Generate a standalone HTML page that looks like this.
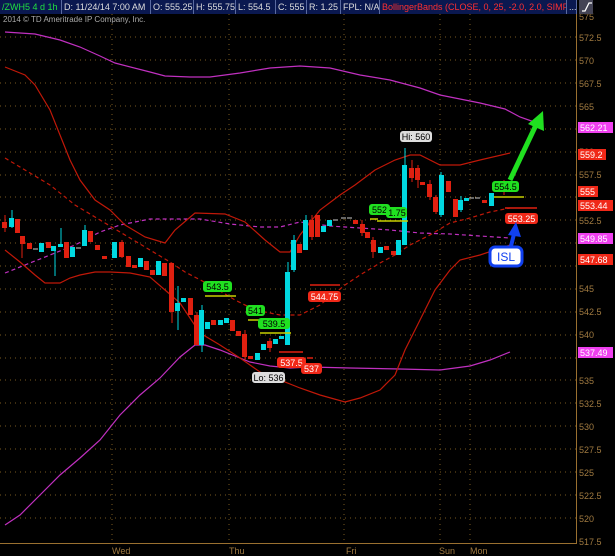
<!DOCTYPE html>
<html><head><meta charset="utf-8"><style>
body{margin:0;background:#000;width:615px;height:556px;overflow:hidden;font-family:"Liberation Sans",sans-serif}
svg{position:absolute;left:0;top:0}
.top{position:absolute;left:0;top:0;height:14px;width:577px;background:#0a1850;font-size:9px;color:#ddd;line-height:14px;overflow:hidden;white-space:nowrap}
.top span{position:absolute;top:0;height:14px;padding-left:2px;border-right:1px solid #5a6aa0;box-sizing:border-box;overflow:hidden}
</style></head><body>
<svg width="615" height="556" font-family="Liberation Sans, sans-serif">
<g stroke="#7a5a20" stroke-dasharray="1,4" stroke-width="1">
<line x1="0" x2="576" y1="37" y2="37"/><line x1="0" x2="576" y1="60" y2="60"/><line x1="0" x2="576" y1="83" y2="83"/><line x1="0" x2="576" y1="106" y2="106"/><line x1="0" x2="576" y1="129" y2="129"/><line x1="0" x2="576" y1="152" y2="152"/><line x1="0" x2="576" y1="175" y2="175"/><line x1="0" x2="576" y1="197" y2="197"/><line x1="0" x2="576" y1="220" y2="220"/><line x1="0" x2="576" y1="243" y2="243"/><line x1="0" x2="576" y1="266" y2="266"/><line x1="0" x2="576" y1="289" y2="289"/><line x1="0" x2="576" y1="312" y2="312"/><line x1="0" x2="576" y1="335" y2="335"/><line x1="0" x2="576" y1="358" y2="358"/><line x1="0" x2="576" y1="380" y2="380"/><line x1="0" x2="576" y1="403" y2="403"/><line x1="0" x2="576" y1="426" y2="426"/><line x1="0" x2="576" y1="449" y2="449"/><line x1="0" x2="576" y1="472" y2="472"/><line x1="0" x2="576" y1="495" y2="495"/><line x1="0" x2="576" y1="518" y2="518"/>
<line x1="112" x2="112" y1="14" y2="544"/><line x1="229" x2="229" y1="14" y2="544"/><line x1="344" x2="344" y1="14" y2="544"/><line x1="440" x2="440" y1="14" y2="544"/><line x1="470" x2="470" y1="14" y2="544"/>
</g>
<line x1="576.5" x2="576.5" y1="14" y2="544" stroke="#9a7030"/>
<line x1="0" x2="577" y1="543.5" y2="543.5" stroke="#9a7030"/>
<g fill="#a07a40" font-size="9">
<text x="579" y="20">575</text><text x="579" y="41">572.5</text><text x="579" y="64">570</text><text x="579" y="87">567.5</text><text x="579" y="110">565</text><text x="579" y="155">560</text><text x="579" y="178">557.5</text><text x="579" y="224">552.5</text><text x="579" y="292">545</text><text x="579" y="315">542.5</text><text x="579" y="338">540</text><text x="579" y="384">535</text><text x="579" y="407">532.5</text><text x="579" y="430">530</text><text x="579" y="453">527.5</text><text x="579" y="476">525</text><text x="579" y="499">522.5</text><text x="579" y="522">520</text><text x="579" y="545">517.5</text>
<text x="112" y="554">Wed</text><text x="229" y="554">Thu</text><text x="346" y="554">Fri</text><text x="439" y="554">Sun</text><text x="470" y="554">Mon</text>
</g>
<text x="3" y="22" fill="#aaa" font-size="8">2014 © TD Ameritrade IP Company, Inc.</text>
<g fill="none" stroke-width="1.2">
<polyline stroke="#c030c0" points="5,32 35,34 60,40 80,47 100,56 115,63 150,72 165,76 190,77 210,77 240,73 270,68 300,66 330,68 360,75 390,80 420,88 440,95 460,99 480,103 505,109 520,117 540,124"/>
<polyline stroke="#c030c0" points="5,525 20,515 40,495 60,475 80,458 100,440 120,415 140,395 160,378 180,357 195,345 205,345 220,350 235,356 250,362 270,366 290,368 310,367 350,368 400,369 440,370 470,366 490,360 510,352"/>
<polyline stroke="#c030c0" stroke-dasharray="4,3" points="5,273 25,265 50,255 75,245 100,232 120,225 150,219 180,219 200,219 230,224 260,227 280,227 300,222 330,226 360,228 390,230 420,233 450,234 480,236 510,238"/>
<polyline stroke="#c01808" points="5,67 25,75 35,85 50,110 60,135 70,160 80,180 95,200 110,210 125,225 145,237 165,243 175,230 195,213 225,214 245,222 265,240 280,252 290,252 300,235 320,210 340,195 355,185 375,170 395,160 410,155 420,155 440,165 460,165 480,160 510,153"/>
<polyline stroke="#c01808" points="5,250 20,262 35,275 45,283 60,283 70,278 80,275 95,272 110,272 130,273 140,275 150,277 165,290 180,303 200,333 220,345 240,358 260,372 280,380 300,388 320,395 345,402 360,398 380,390 395,375 405,350 420,320 435,290 450,270 460,260 480,255 510,245"/>
<polyline stroke="#c01808" stroke-dasharray="4,3" points="5,158 25,170 50,185 75,205 100,220 125,235 150,250 170,262 185,272 210,285 235,300 255,310 280,315 300,315 320,305 345,285 360,275 380,263 395,255 410,245 430,235 450,223 470,218 490,212 510,208"/>
</g>
<path stroke="#00d8e0" fill="none" d="M12,210V228M55,246V276M61,228V247M85,225V246M178,286V330M202,305V352M288,262V345M294,235V272M306,215V250M405,148V245M441,172V217M461,196V212"/>
<path stroke="#e02010" fill="none" d="M5,215V232M22,236V258M122,240V258M172,263V323M197,312V345M245,330V360M270,338V352M312,215V240M362,220V236M373,237V258M412,160V182M418,165V188M430,180V200M436,195V214M504,180V195"/>
<g fill="#00d8e0">
<rect x="9" y="218" width="5" height="9"/><rect x="39" y="243" width="5" height="9"/><rect x="51" y="246" width="5" height="5"/><rect x="58" y="244" width="5" height="3"/><rect x="70" y="247" width="5" height="10"/><rect x="82" y="230" width="5" height="16"/><rect x="112" y="242" width="5" height="16"/><rect x="138" y="258" width="5" height="9"/><rect x="156" y="261" width="5" height="14"/><rect x="175" y="303" width="5" height="8"/><rect x="181" y="298" width="5" height="4"/><rect x="199" y="310" width="5" height="35"/><rect x="205" y="322" width="5" height="7"/><rect x="218" y="320" width="5" height="5"/><rect x="224" y="318" width="5" height="5"/><rect x="255" y="353" width="5" height="7"/><rect x="261" y="344" width="5" height="6"/><rect x="273" y="339" width="5" height="5"/><rect x="279" y="336" width="5" height="3"/><rect x="285" y="272" width="5" height="73"/><rect x="291" y="240" width="5" height="30"/><rect x="303" y="220" width="5" height="30"/><rect x="321" y="226" width="5" height="6"/><rect x="327" y="220" width="5" height="6"/><rect x="378" y="247" width="5" height="6"/><rect x="396" y="240" width="5" height="15"/><rect x="402" y="165" width="5" height="80"/><rect x="439" y="175" width="5" height="40"/><rect x="458" y="200" width="5" height="10"/><rect x="464" y="198" width="5" height="3"/><rect x="489" y="193" width="5" height="13"/><rect x="495" y="185" width="5" height="5"/>
</g>
<g fill="#e02010">
<rect x="2" y="222" width="5" height="6"/><rect x="15" y="219" width="5" height="14"/><rect x="20" y="236" width="5" height="8"/><rect x="27" y="243" width="5" height="6"/><rect x="46" y="242" width="5" height="6"/><rect x="64" y="242" width="5" height="16"/><rect x="88" y="231" width="5" height="11"/><rect x="95" y="245" width="5" height="5"/><rect x="102" y="256" width="5" height="3"/><rect x="119" y="242" width="5" height="15"/><rect x="126" y="256" width="5" height="11"/><rect x="132" y="265" width="5" height="3"/><rect x="144" y="261" width="5" height="9"/><rect x="150" y="270" width="5" height="5"/><rect x="162" y="263" width="5" height="13"/><rect x="169" y="263" width="5" height="49"/><rect x="188" y="298" width="5" height="17"/><rect x="194" y="315" width="5" height="30"/><rect x="211" y="320" width="5" height="5"/><rect x="230" y="320" width="5" height="11"/><rect x="236" y="331" width="5" height="5"/><rect x="242" y="334" width="5" height="23"/><rect x="248" y="356" width="5" height="3"/><rect x="267" y="341" width="5" height="7"/><rect x="297" y="244" width="5" height="9"/><rect x="309" y="220" width="5" height="17"/><rect x="315" y="215" width="5" height="22"/><rect x="353" y="220" width="5" height="4"/><rect x="360" y="224" width="5" height="9"/><rect x="365" y="232" width="5" height="6"/><rect x="371" y="240" width="5" height="12"/><rect x="384" y="246" width="5" height="4"/><rect x="391" y="251" width="5" height="4"/><rect x="409" y="168" width="5" height="10"/><rect x="415" y="168" width="5" height="12"/><rect x="420" y="182" width="5" height="3"/><rect x="427" y="184" width="5" height="13"/><rect x="433" y="197" width="5" height="15"/><rect x="446" y="181" width="5" height="11"/><rect x="453" y="199" width="5" height="18"/><rect x="482" y="200" width="5" height="3"/><rect x="501" y="185" width="5" height="5"/>
</g>
<path stroke="#ccc" d="M33,249h5M76,248h5M333,220h5M341,218h5M347,218h5M469,198h5M475,198h5"/>
<g stroke="#c8d000" stroke-width="1.5">
<line x1="205" x2="236" y1="296" y2="296"/><line x1="248" x2="264" y1="320" y2="320"/><line x1="260" x2="291" y1="333" y2="333"/><line x1="370" x2="378" y1="219" y2="219"/><line x1="377" x2="408" y1="221" y2="221"/><line x1="494" x2="524" y1="197" y2="197"/>
</g>
<g stroke="#e02010" stroke-width="1.5">
<line x1="279" x2="303" y1="352" y2="352"/><line x1="307" x2="313" y1="358" y2="358"/><line x1="310" x2="340" y1="285" y2="285"/><line x1="505" x2="537" y1="208" y2="208"/>
</g>
<g font-size="9" text-anchor="middle">
<rect x="203" y="281" width="29" height="11" rx="3" fill="#20e020"/><text x="217.5" y="290" fill="#000">543.5</text>
<rect x="246" y="305" width="19" height="11" rx="3" fill="#20e020"/><text x="255.5" y="314" fill="#000">541</text>
<rect x="258" y="318" width="32" height="11" rx="3" fill="#20e020"/><text x="274" y="327" fill="#000">539.5</text>
<rect x="369" y="204" width="21" height="11" rx="3" fill="#20e020"/><text x="379.5" y="213" fill="#000">552</text>
<rect x="386" y="207" width="21" height="11" rx="3" fill="#20e020"/><text x="397" y="216" fill="#000">1.75</text>
<rect x="492" y="181" width="27" height="11" rx="3" fill="#20e020"/><text x="505.5" y="190" fill="#000">554.5</text>
<rect x="277" y="357" width="29" height="11" rx="3" fill="#f02818"/><text x="291.5" y="366" fill="#fff">537.5</text>
<rect x="301" y="363" width="21" height="11" rx="3" fill="#f02818"/><text x="311.5" y="372" fill="#fff">537</text>
<rect x="308" y="291" width="33" height="11" rx="3" fill="#f02818"/><text x="324.5" y="300" fill="#fff">544.75</text>
<rect x="505" y="213" width="33" height="11" rx="3" fill="#f02818"/><text x="521.5" y="222" fill="#fff">553.25</text>
<rect x="400" y="131" width="32" height="11" rx="3" fill="#ddd"/><text x="416" y="140" fill="#000">Hi: 560</text>
<rect x="252" y="372" width="33" height="11" rx="3" fill="#ddd"/><text x="268.5" y="381" fill="#000">Lo: 536</text>
</g>
<g font-size="9">
<rect x="578" y="122" width="35" height="11" fill="#f040f0"/><text x="580" y="131" fill="#fff">562.21</text>
<rect x="578" y="149" width="28" height="11" fill="#f02818"/><text x="580" y="158" fill="#fff">559.2</text>
<rect x="578" y="186" width="20" height="11" fill="#f02818"/><text x="580" y="195" fill="#fff">555</text>
<rect x="578" y="200" width="35" height="11" fill="#f02818"/><text x="580" y="209" fill="#fff">553.44</text>
<rect x="578" y="233" width="35" height="11" fill="#f040f0"/><text x="580" y="242" fill="#fff">549.85</text>
<rect x="578" y="254" width="35" height="11" fill="#f02818"/><text x="580" y="263" fill="#fff">547.68</text>
<rect x="578" y="347" width="35" height="11" fill="#f040f0"/><text x="580" y="356" fill="#fff">537.49</text>
</g>
<line x1="510" y1="180" x2="536" y2="125" stroke="#20e020" stroke-width="5"/>
<polygon points="543,111 544,131 528,124" fill="#20e020"/>
<line x1="511" y1="246" x2="514" y2="234" stroke="#1040f0" stroke-width="4"/>
<polygon points="516,222 521,237 508,235" fill="#1040f0"/>
<rect x="490" y="247" width="32" height="19" rx="5" fill="#fff" stroke="#1040f0" stroke-width="3"/>
<text x="506" y="261" font-size="12" fill="#1040f0" text-anchor="middle">ISL</text>
<rect x="579" y="0" width="14" height="14" fill="#445"/><path d="M582,11h3l4,-8h3" stroke="#fff" fill="none" stroke-width="1.3"/>
</svg>
<div class="top">
<span style="left:0;width:62px;color:#20e040">/ZWH5 4 d 1h</span>
<span style="left:62px;width:89px">D: 11/24/14 7:00 AM</span>
<span style="left:151px;width:43px">O: 555.25</span>
<span style="left:194px;width:42px">H: 555.75</span>
<span style="left:236px;width:40px">L: 554.5</span>
<span style="left:276px;width:31px">C: 555</span>
<span style="left:307px;width:34px">R: 1.25</span>
<span style="left:341px;width:39px">FPL: N/A</span>
<span style="left:380px;width:187px;color:#ff3030">BollingerBands (CLOSE, 0, 25, -2.0, 2.0, SIMPLE)</span>
<span style="left:567px;width:10px">...</span>
</div>
</body></html>
